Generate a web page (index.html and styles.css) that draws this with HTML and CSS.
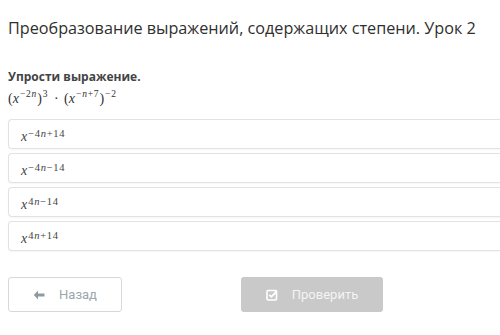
FILE: index.html
```html
<!DOCTYPE html>
<html lang="ru">
<head>
  <meta charset="UTF-8" />
  <meta name="viewport" content="width=device-width, initial-scale=1.0" />
  <title>Урок 2</title>
  <link rel="stylesheet" href="styles.css">
</head>
<body>
  <h1 class="title">Преобразование выражений, содержащих степени. Урок 2</h1>

  <section class="task">
    <p class="task-label">Упрости выражение.</p>
    <p class="formula">
      (<i>x</i><sup>−2<i>n</i></sup>)<sup>3</sup> <span class="dot">·</span> (<i>x</i><sup>−<i>n</i>+7</sup>)<sup>−2</sup>
    </p>

    <div class="options">
      <div class="option"><i>x</i><sup>−4<i>n</i>+14</sup></div>
      <div class="option"><i>x</i><sup>−4<i>n</i>−14</sup></div>
      <div class="option"><i>x</i><sup>4<i>n</i>−14</sup></div>
      <div class="option"><i>x</i><sup>4<i>n</i>+14</sup></div>
    </div>
  </section>

  <div class="actions">
    <button class="btn btn-back">
      <svg width="12" height="10" viewBox="0 0 12 10"><path d="M5 0.5 L0.8 5 L5 9.5 L5 6.6 L11.5 6.6 L11.5 3.4 L5 3.4 Z" fill="#8f9aa2"/></svg>
      <span>Назад</span>
    </button>
    <button class="btn btn-check" disabled>
      <svg width="12" height="12" viewBox="0 0 12 12"><rect x="1" y="1.5" width="9.5" height="9.5" rx="1" fill="none" stroke="#fff" stroke-width="1.6"/><path d="M3.3 5.8 L5.4 7.8 L11 2" fill="none" stroke="#fff" stroke-width="1.8"/></svg>
      <span>Проверить</span>
    </button>
  </div>
</body>
</html>
```

FILE: styles.css
```css
body {
  margin: 0;
  padding: 0 0 0 8px;
  background: #fff;
  font-family: "Open Sans", sans-serif;
  color: #333;
}
.title {
  margin: 0;
  padding-top: 16px;
  font-size: 16.2px;
  font-weight: 400;
  line-height: 24px;
  color: #2f2f2f;
}
.task {
  margin-top: 29px;
}
.task-label {
  margin: 0;
  font-size: 12px;
  font-weight: 700;
  line-height: 16px;
  color: #444;
}
.formula {
  margin: 5px 0 0 0;
  font-family: "Liberation Serif", serif;
  font-size: 14px;
  line-height: 18px;
  color: #333;
}
.formula sup {
  letter-spacing: 0.8px;
  margin-left: 1px;
}
.dot {
  margin: 0 2px;
}
i {
  font-style: italic;
}
sup {
  font-size: 9.5px;
  vertical-align: 6px;
  line-height: 0;
}
.options {
  display: flex;
  flex-direction: column;
  gap: 4px;
  margin-top: 11px;
}
.option {
  height: 28px;
  border: 1px solid #e2e2e2;
  border-right: none;
  border-radius: 4px 0 0 4px;
  box-shadow: 0 1px 2px rgba(0, 0, 0, 0.04);
  padding: 0 12px;
  display: flex;
  align-items: center;
  font-family: "Liberation Serif", serif;
  font-size: 14px;
  color: #444;
}
.option i {
  margin-top: 5px;
}
.option sup {
  font-size: 10.5px;
  letter-spacing: 0.7px;
  margin-left: 1px;
}
.actions {
  display: flex;
  gap: 119px;
  margin-top: 26px;
}
.btn {
  height: 35px;
  border-radius: 3px;
  display: flex;
  align-items: center;
  justify-content: center;
  gap: 14px;
  font-family: Roboto, sans-serif;
  font-size: 13px;
  cursor: pointer;
}
.btn-back {
  width: 114px;
  background: #fff;
  border: 1px solid #d6d9db;
  color: #9ba6ad;
}
.btn-check {
  width: 142px;
  background: #c9c9c9;
  border: none;
  color: #f4f4f4;
}
```
